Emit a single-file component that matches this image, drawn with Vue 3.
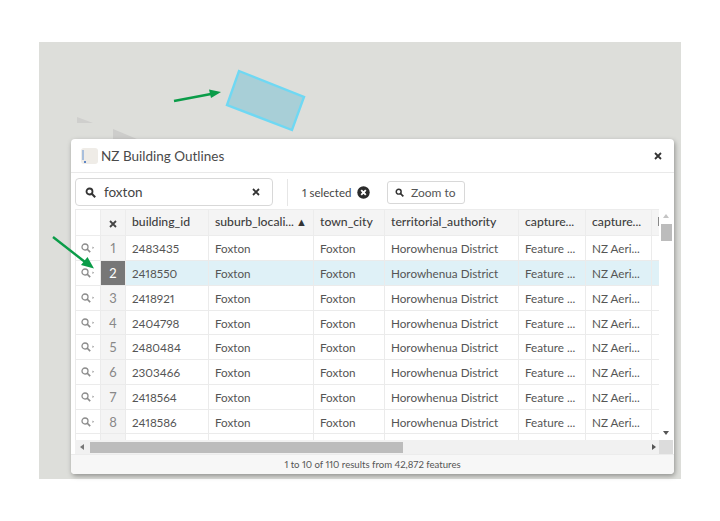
<script setup>
const ids = ["2483435", "2418550", "2418921", "2404798", "2480484", "2303466", "2418564", "2418586", ""];
const rows = ids.map((id, i) => ({
  id,
  num: id ? i + 1 : "",
  suburb: id ? "Foxton" : "",
  town: id ? "Foxton" : "",
  ta: id ? "Horowhenua District" : "",
  c1: id ? "Feature ..." : "",
  c2: id ? "NZ Aeri..." : "",
  selected: i === 1,
}));
</script>

<template>
  <div class="page">
    <div class="map">
      <svg class="map-art" width="642" height="437" viewBox="39 42 642 437">
        <polygon points="77,117 93,123 77,123" fill="#cfcfcd" />
        <polygon points="113,129 137,139 113,139" fill="#cdcdcb" />
        <polygon points="239,71 304,97 292,130 227,105" fill="#a8cfd7" stroke="#6fd8f3" stroke-width="2.4" />
      </svg>

      <div class="panel">
        <div class="panel-head">
          <span class="layer-thumb"><i></i><b></b></span>
          <span class="panel-title">NZ Building Outlines</span>
          <svg class="close" width="8" height="8" viewBox="0 0 8 8"><path d="M1 1l6 6M7 1l-6 6" stroke="#333" stroke-width="1.8" /></svg>
        </div>

        <div class="toolbar">
          <div class="search">
            <svg width="11" height="11" viewBox="0 0 11 11"><circle cx="4.5" cy="4.5" r="3" fill="none" stroke="#333" stroke-width="1.8" /><path d="M6.8 6.8l3.4 3.4" stroke="#333" stroke-width="2" /></svg>
            <span class="search-text">foxton</span>
            <svg class="search-clear" width="8" height="8" viewBox="0 0 8 8"><path d="M1 1l6 6M7 1l-6 6" stroke="#333" stroke-width="1.8" /></svg>
          </div>
          <div class="divider"></div>
          <span class="selected">1 selected</span>
          <svg class="clear-sel" width="13" height="13" viewBox="0 0 13 13"><circle cx="6.5" cy="6.5" r="6.2" fill="#2b2b2b" /><path d="M4.2 4.2l4.6 4.6M8.8 4.2l-4.6 4.6" stroke="#fff" stroke-width="1.9" /></svg>
          <button class="zoom-btn">
            <svg width="9" height="9" viewBox="0 0 11 11"><circle cx="4.5" cy="4.5" r="3" fill="none" stroke="#333" stroke-width="1.8" /><path d="M6.8 6.8l3.4 3.4" stroke="#333" stroke-width="2" /></svg>
            Zoom to
          </button>
        </div>

        <div class="grid-wrap">
          <div class="grid-main">
            <div class="grid-clip">
              <table class="grid">
                <colgroup>
                  <col style="width: 25px" /><col style="width: 25px" /><col style="width: 83px" />
                  <col style="width: 105px" /><col style="width: 71px" /><col style="width: 134px" />
                  <col style="width: 67px" /><col style="width: 66px" /><col style="width: 66px" />
                </colgroup>
                <thead>
                  <tr>
                    <th class="blank"></th>
                    <th class="num">
                      <svg width="8" height="8" viewBox="0 0 8 8"><path d="M1 1l6 6M7 1l-6 6" stroke="#444" stroke-width="1.8" /></svg>
                    </th>
                    <th>building_id</th>
                    <th>suburb_locali...<span class="sort">▲</span></th>
                    <th>town_city</th>
                    <th>territorial_authority</th>
                    <th>capture...</th>
                    <th>capture...</th>
                    <th><span class="cut-mark"></span></th>
                  </tr>
                </thead>
                <tbody>
                  <tr v-for="row in rows" :key="row.id" :class="{ sel: row.selected }">
                    <td class="blank">
                      <svg v-if="row.id" class="row-zoom" width="14" height="10" viewBox="0 0 14 10"><circle cx="4" cy="4" r="3" fill="none" stroke="#8c8c8c" stroke-width="1.3" /><path d="M6 6l3.200 3.200" stroke="#8c8c8c" stroke-width="1.7" /><path d="M11.500 3.500v2.500l1.500-1.200z" fill="#8c8c8c" /></svg>
                    </td>
                    <td class="num">{{ row.num }}</td>
                    <td>{{ row.id }}</td>
                    <td>{{ row.suburb }}</td>
                    <td>{{ row.town }}</td>
                    <td>{{ row.ta }}</td>
                    <td>{{ row.c1 }}</td>
                    <td>{{ row.c2 }}</td>
                    <td></td>
                  </tr>
                </tbody>
              </table>
            </div>
            <div class="vbar">
              <span class="tri up"></span>
              <span class="vthumb"></span>
              <span class="tri down"></span>
            </div>
          </div>
          <div class="hbar">
            <span class="tri left"></span>
            <span class="hthumb"></span>
            <span class="tri right"></span>
            <span class="corner"></span>
          </div>
        </div>

        <div class="panel-foot">1 to 10 of 110 results from 42,872 features</div>
      </div>
    </div>

    <svg class="arrows" width="720" height="521" viewBox="0 0 720 521">
      <path d="M174 101L211 94" stroke="#0a9c48" stroke-width="2.4" />
      <path d="M221 92L209 89.500L211 98z" fill="#0a9c48" />
      <path d="M53 237L85 262" stroke="#0a9c48" stroke-width="2.4" />
      <path d="M94 268.500L87.500 257L81 265z" fill="#0a9c48" />
    </svg>
  </div>
</template>

<style>
html,
body {
  background: #fff;
}
</style>

<style scoped>
.page {
  position: relative;
  width: 720px;
  height: 521px;
  padding: 42px 39px;
  box-sizing: border-box;
  font-family: Lato, "Open Sans", sans-serif;
  font-variant-numeric: proportional-nums;
  color: #555;
}

.map {
  position: relative;
  width: 642px;
  height: 437px;
  background: #dddeda;
}

.map-art,
.arrows {
  position: absolute;
  left: 0;
  top: 0;
}

.arrows {
  pointer-events: none;
}

.panel {
  position: absolute;
  left: 32px;
  top: 97px;
  width: 603px;
  height: 335px;
  display: flex;
  flex-direction: column;
  background: #fff;
  border-radius: 4px;
  box-shadow: 1px 2px 5px rgba(0, 0, 0, 0.35);
  overflow: hidden;
}

.panel-head {
  flex: none;
  height: 34px;
  display: flex;
  align-items: center;
  padding: 0 12px 0 10px;
  border-bottom: 1px solid #e9e9e9;
  box-sizing: border-box;
}

.layer-thumb {
  position: relative;
  width: 17px;
  height: 16px;
  margin-right: 3px;
  background: #efece7;
  border-radius: 3px;
  overflow: hidden;
}

.layer-thumb i {
  position: absolute;
  left: 1px;
  top: 2px;
  width: 2px;
  height: 10px;
  background: #a9bfdc;
}

.layer-thumb b {
  position: absolute;
  left: 3px;
  top: 13px;
  width: 2px;
  height: 2px;
  background: #5f86c4;
}

.panel-title {
  font-size: 13.500px;
  color: #4a4a4a;
  flex: 1;
}

.toolbar {
  flex: none;
  height: 36px;
  display: flex;
  align-items: center;
  padding: 2px 4px 0;
  box-sizing: border-box;
}

.search {
  width: 198px;
  height: 28px;
  display: flex;
  align-items: center;
  padding: 0 12px 0 9px;
  border: 1px solid #d8d8d8;
  border-radius: 4px;
  box-sizing: border-box;
}

.search-text {
  flex: 1;
  margin-left: 8px;
  font-size: 13.500px;
  color: #444;
}

.divider {
  width: 1px;
  height: 27px;
  margin: 0 14px;
  background: #e6e6e6;
}

.selected {
  width: 50px;
  font-size: 11.500px;
  white-space: nowrap;
  color: #444;
}

.clear-sel {
  margin-left: 5px;
}

.zoom-btn {
  width: 78px;
  height: 23px;
  margin-left: 17px;
  padding: 0 0 0 7px;
  display: flex;
  align-items: center;
  gap: 7px;
  border: 1px solid #d8d8d8;
  border-radius: 3px;
  background: #fff;
  font: 12px Lato, sans-serif;
  color: #555;
  box-sizing: border-box;
}

.grid-wrap {
  flex: 1;
  min-height: 0;
  display: flex;
  flex-direction: column;
  padding: 0 1px 0 4px;
}

.grid-main {
  flex: 1;
  min-height: 0;
  display: flex;
}

.grid-clip {
  flex: 1;
  min-width: 0;
  overflow: hidden;
}

.grid {
  table-layout: fixed;
  width: 642px;
  border-collapse: collapse;
  font-size: 11.700px;
}

.grid th,
.grid td {
  height: 24.750px;
  padding: 0 6px;
  border: 1px solid #ebebeb;
  box-sizing: border-box;
  text-align: left;
  white-space: nowrap;
  overflow: hidden;
}

.grid th {
  height: 26.400px;
  padding-bottom: 2px;
  background: #f4f4f4;
  font-size: 12.200px;
  font-weight: 500;
  color: #3d3d3d;
  border-color: #ececec;
}

.grid .blank {
  padding: 0 0 0 5px;
  background: #fff;
}

.grid .num {
  padding: 0;
  text-align: center;
  background: #f4f4f4;
  font-size: 13px;
  color: #888;
}

.row-zoom {
  display: block;
}

.sort {
  font-size: 11px;
  margin-left: 2px;
  color: #333;
}

.cut-mark {
  display: block;
  width: 1px;
  height: 9px;
  background: #888;
}

.sel td {
  background: #dff1f7;
}

.sel td.blank {
  background: #fff;
}

.sel td.num {
  background: #777;
  color: #fff;
}

.vbar {
  position: relative;
  flex: none;
  width: 14px;
  display: flex;
  flex-direction: column;
  align-items: center;
  padding: 5px 0;
  box-sizing: border-box;
  background: #fff;
}

.vthumb {
  width: 11px;
  height: 17px;
  margin-top: 6px;
  background: #bcbcbc;
}

.vbar .down {
  margin-top: auto;
}

.tri {
  width: 0;
  height: 0;
  border-style: solid;
  border-color: transparent;
}

.up {
  border-width: 0 3.500px 4px;
  border-bottom-color: #c4c4c4;
}

.down {
  border-width: 4px 3.500px 0;
  border-top-color: #555;
}

.left {
  border-width: 3.500px 4px 3.500px 0;
  border-right-color: #777;
}

.right {
  border-width: 3.500px 0 3.500px 4px;
  border-left-color: #555;
}

.hbar {
  flex: none;
  height: 14px;
  display: flex;
  align-items: center;
  padding-left: 5px;
  background: #f1f1f1;
}

.hthumb {
  width: 313px;
  height: 11px;
  margin-left: 6px;
  background: #bcbcbc;
}

.hbar .right {
  margin-left: auto;
  margin-right: 3px;
}

.corner {
  width: 14px;
  height: 14px;
  background: #dcdcdc;
}

.panel-foot {
  flex: none;
  height: 20px;
  line-height: 20px;
  text-align: center;
  font-size: 9.600px;
  color: #555;
  background: #f7f7f7;
  border-top: 1px solid #ececec;
  box-sizing: border-box;
}
</style>
